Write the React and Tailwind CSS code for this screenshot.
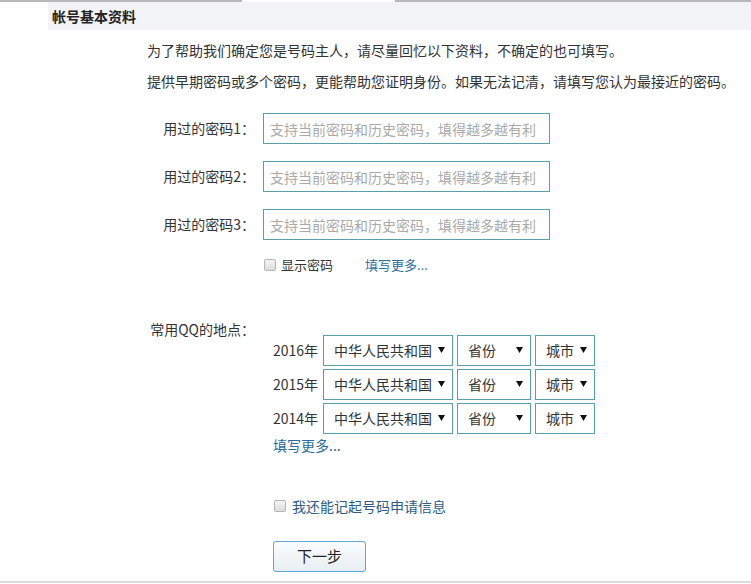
const font = { fontFamily: '"Noto Sans CJK SC", "Liberation Sans", sans-serif' }

const Arrow = () => (
  <svg width="7" height="8" viewBox="0 0 7 8">
    <path d="M0 1h7L3.5 7z" fill="#111" />
  </svg>
)

const Select = ({ label, width }) => (
  <div className={`flex h-[31px] items-center justify-between border border-[#5a9ea8] bg-white pl-[10px] pr-[7px] text-[14px] text-[#333] ${width}`}>
    <span>{label}</span>
    <Arrow />
  </div>
)

const PwdRow = ({ n }) => (
  <div className="flex items-center">
    <div className="w-[255px] text-right text-[14px] text-[#333]">用过的密码{n}：</div>
    <input
      className="ml-[8px] h-[31px] w-[287px] border border-[#5a9ea8] px-[6px] text-[14px] outline-none placeholder:text-[#aaa]"
      placeholder="支持当前密码和历史密码，填得越多越有利"
      style={font}
    />
  </div>
)

const Box = () => (
  <span className="inline-block h-[12px] w-[12px] rounded-[2px] border border-[#b5b5b5] bg-gradient-to-b from-[#f4f4f4] to-[#dcdcdc]" />
)

export default function App() {
  const years = ['2016', '2015', '2014']
  return (
    <div className="relative h-[584px] w-[751px] overflow-hidden bg-white" style={font}>
      {/* top edge */}
      <div className="flex h-[2px]">
        <div className="w-[242px] bg-[#b8b8b8]" />
        <div className="w-[153px]" />
        <div className="flex-1 bg-[#b8b8b8]" />
      </div>
      <div className="ml-[48px] flex h-[28px] items-center bg-[#f1f3f6] pl-[4px] text-[14px] font-bold text-[#222]">
        帐号基本资料
      </div>

      <div className="pl-[147px] pt-[5px] text-[14px] leading-[31px] text-[#333]">
        <p>为了帮助我们确定您是号码主人，请尽量回忆以下资料，不确定的也可填写。</p>
        <p>提供早期密码或多个密码，更能帮助您证明身份。如果无法记清，请填写您认为最接近的密码。</p>
      </div>

      <div className="mt-[16px] flex flex-col gap-[17px]">
        <PwdRow n={1} />
        <PwdRow n={2} />
        <PwdRow n={3} />
      </div>

      <div className="mt-[15px] flex items-center pl-[264px] text-[13px]">
        <Box />
        <span className="ml-[5px] text-[#333]">显示密码</span>
        <span className="ml-[32px] text-[#2b6e9c]">填写更多...</span>
      </div>

      <div className="mt-[44px] w-[255px] text-right text-[14px] text-[#333]">常用QQ的地点：</div>

      <div className="-mt-[5px] flex flex-col gap-[3px] pl-[273px]">
        {years.map((y) => (
          <div key={y} className="flex items-center">
            <span className="w-[50px] text-[14px] text-[#333]">{y}年</span>
            <Select label="中华人民共和国" width="w-[130px]" />
            <div className="w-[4px]" />
            <Select label="省份" width="w-[74px]" />
            <div className="w-[4px]" />
            <Select label="城市" width="w-[60px]" />
          </div>
        ))}
        <div className="-mt-[2px] text-[14px] text-[#2b6e9c]">填写更多...</div>
      </div>

      <div className="mt-[40px] flex items-center pl-[274px] text-[14px]">
        <Box />
        <span className="ml-[6px] text-[#2c5b85]">我还能记起号码申请信息</span>
      </div>

      <div className="mt-[24px] pl-[273px]">
        <button className="h-[31px] w-[93px] rounded-[3px] border border-[#5aa7d8] bg-gradient-to-b from-[#fbfcfd] to-[#e8eef3] text-[15px] text-[#222]">
          下一步
        </button>
      </div>

      <div className="absolute bottom-[1px] left-0 h-[2px] w-full bg-[#dcdcdc]" />
    </div>
  )
}
